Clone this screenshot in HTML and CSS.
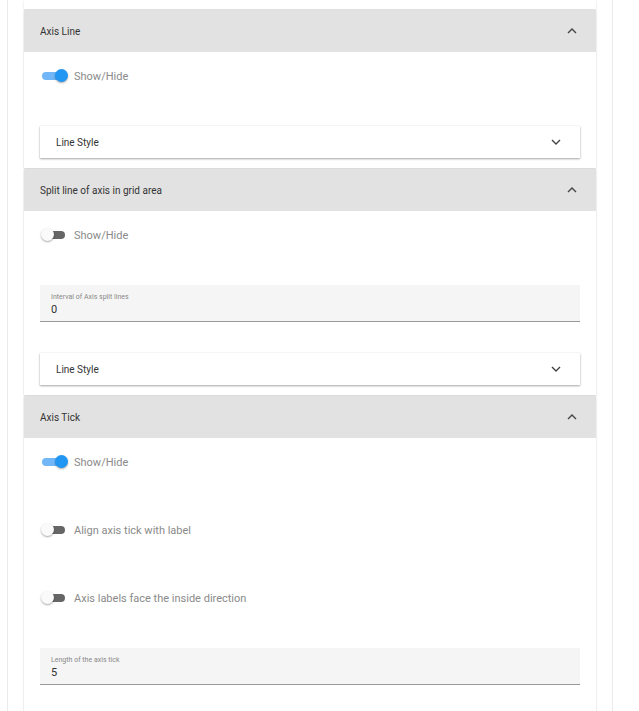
FILE: index.html
```html
<!DOCTYPE html>
<html>
<head>
<meta charset="utf-8">
<link rel="stylesheet" href="styles.css">
</head>
<body>
<div class="outer">
  <div class="prev-tail"></div>

  <section class="panel">
    <header class="panel-head">
      <span>Axis Line</span>
      <svg class="chev" viewBox="0 0 10 6" width="10" height="6"><path d="M1 5 L5 1 L9 5" /></svg>
    </header>
    <div class="panel-body">
      <div class="toggle-row">
        <span class="switch on"><span class="track"></span><span class="thumb"></span></span>
        <span class="toggle-label">Show/Hide</span>
      </div>
      <div class="sub-panel">
        <span>Line Style</span>
        <svg class="chev" viewBox="0 0 10 6" width="10" height="6"><path d="M1 1 L5 5 L9 1" /></svg>
      </div>
    </div>
  </section>

  <section class="panel">
    <header class="panel-head">
      <span>Split line of axis in grid area</span>
      <svg class="chev" viewBox="0 0 10 6" width="10" height="6"><path d="M1 5 L5 1 L9 5" /></svg>
    </header>
    <div class="panel-body">
      <div class="toggle-row">
        <span class="switch"><span class="track"></span><span class="thumb"></span></span>
        <span class="toggle-label">Show/Hide</span>
      </div>
      <div class="field">
        <span class="field-label">Interval of Axis split lines</span>
        <span class="field-value">0</span>
      </div>
      <div class="sub-panel after-field">
        <span>Line Style</span>
        <svg class="chev" viewBox="0 0 10 6" width="10" height="6"><path d="M1 1 L5 5 L9 1" /></svg>
      </div>
    </div>
  </section>

  <section class="panel last">
    <header class="panel-head">
      <span>Axis Tick</span>
      <svg class="chev" viewBox="0 0 10 6" width="10" height="6"><path d="M1 5 L5 1 L9 5" /></svg>
    </header>
    <div class="panel-body">
      <div class="toggle-row">
        <span class="switch on"><span class="track"></span><span class="thumb"></span></span>
        <span class="toggle-label">Show/Hide</span>
      </div>
      <div class="toggle-row">
        <span class="switch"><span class="track"></span><span class="thumb"></span></span>
        <span class="toggle-label">Align axis tick with label</span>
      </div>
      <div class="toggle-row">
        <span class="switch"><span class="track"></span><span class="thumb"></span></span>
        <span class="toggle-label">Axis labels face the inside direction</span>
      </div>
      <div class="field">
        <span class="field-label">Length of the axis tick</span>
        <span class="field-value">5</span>
      </div>
    </div>
  </section>
</div>
</body>
</html>
```

FILE: styles.css
```css
*, *::before, *::after {
  box-sizing: border-box;
}

html, body {
  margin: 0;
  padding: 0;
  background: #fff;
  font-family: Roboto, "Liberation Sans", sans-serif;
}

body {
  height: 711px;
  overflow: hidden;
}

.outer {
  margin-left: 7px;
  width: 606px;
  min-height: 711px;
  border-left: 1px solid #ebebeb;
  border-right: 1px solid #ebebeb;
  padding: 0 16px;
}

.prev-tail {
  height: 9px;
  background: #fff;
  box-shadow: 0 1px 2px rgba(0,0,0,0.15);
  margin-bottom: 1px;
}

.panel {
  background: #fff;
  box-shadow: 0 1px 2px rgba(0,0,0,0.14), 0 0 1px rgba(0,0,0,0.12);
  margin-bottom: 1px;
}

.panel-head {
  height: 42px;
  background: #e2e2e2;
  display: flex;
  align-items: center;
  justify-content: space-between;
  padding: 0 19px 0 16px;
  font-size: 10px;
  color: #333;
}

.chev {
  fill: none;
  stroke: #444;
  stroke-width: 1.4;
}

.panel-body {
  display: flex;
  flex-direction: column;
  padding: 0 16px 10px;
}

.panel.last .panel-body {
  padding-bottom: 60px;
}

.toggle-row {
  height: 48px;
  display: flex;
  align-items: center;
  margin-bottom: 20px;
}

.toggle-row + .sub-panel,
.toggle-row + .field {
  margin-top: 6px;
}

.switch {
  position: relative;
  width: 25px;
  height: 14px;
  margin-left: 1px;
  margin-right: 8px;
  display: inline-block;
}

.track {
  position: absolute;
  left: 1px;
  right: 1px;
  top: 3px;
  height: 8px;
  border-radius: 4px;
  background: #666;
}

.thumb {
  position: absolute;
  left: 0;
  top: 0;
  width: 13px;
  height: 13px;
  border-radius: 50%;
  background: #fafafa;
  box-shadow: 0 1px 2px rgba(0,0,0,0.35);
}

.switch.on .track {
  background: #71b7f7;
}

.switch.on .thumb {
  left: auto;
  right: -2px;
  background: #2196f3;
}

.toggle-label {
  font-size: 11px;
  color: #8a8a8a;
}

.sub-panel {
  height: 32px;
  display: flex;
  align-items: center;
  justify-content: space-between;
  padding: 0 19px 0 16px;
  background: #fff;
  box-shadow: 0 1px 2px rgba(0,0,0,0.35), 0 0 1px rgba(0,0,0,0.1);
  font-size: 10px;
  color: #333;
}

.sub-panel.after-field {
  margin-top: 31px;
}

.field {
  height: 37px;
  background: #f5f5f5;
  border-bottom: 1px solid #999;
  padding: 0 11px;
  display: flex;
  flex-direction: column;
  justify-content: center;
}

.field-label {
  font-size: 7px;
  color: #888;
  line-height: 10px;
  margin-top: 2px;
}

.field-value {
  font-size: 11px;
  color: #333;
  line-height: 15px;
}
```
